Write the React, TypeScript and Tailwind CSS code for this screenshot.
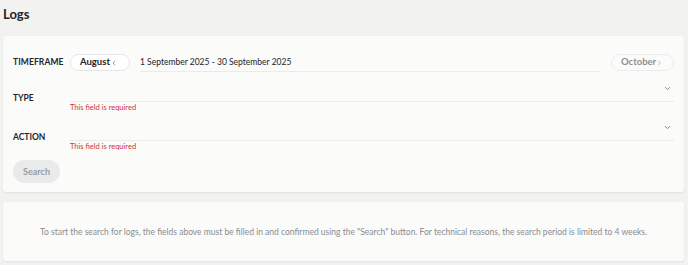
import React from "react";
import { ChevronLeft, ChevronRight, ChevronDown } from "lucide-react";

export default function App() {
  return (
    <div className="min-h-screen bg-[#f2f2f1] pl-[3px] pr-[4px] font-['Lato',sans-serif] text-[#222428]">
      <h1 className="h-[36px] pt-[5px] text-[13px] font-bold leading-[18px]">Logs</h1>

      {/* Search form */}
      <div className="rounded-[3px] bg-[#fbfbfa] pl-[10px] pr-[10px] pt-[18px] pb-[9px] shadow-[0_1px_2px_rgba(0,0,0,0.08)]">
        <div className="flex items-start">
          <span className="w-[57px] pt-[3px] text-[8.5px] font-bold uppercase leading-[11px] tracking-[0.1px]">Timeframe</span>
          <button className="flex h-[17px] w-[60px] items-center justify-between rounded-full border border-[#e6e6e6] bg-white pl-[9px] pr-[11px] text-[9.5px] font-bold">
            August <ChevronLeft size={8} strokeWidth={1.75} className="text-[#555]" />
          </button>
          <div className="ml-[10px] flex h-[18px] flex-1 items-center border-b border-[#ebebeb] text-[8.5px]">
            1 September 2025 - 30 September 2025
          </div>
          <button className="ml-[11px] flex h-[17px] w-[63px] items-center justify-between rounded-full border border-[#ececec] pl-[9px] pr-[10px] text-[9.5px] font-bold text-[#8d8f93]">
            October <ChevronRight size={8} strokeWidth={1.75} />
          </button>
        </div>

        <SelectRow label="Type" height="h-[30px]" />
        <SelectRow label="Action" height="h-[28px]" />

        <button className="mt-[8px] h-[23px] w-[47px] rounded-full bg-[#e9eaea] text-[9px] font-bold text-[#9a9c9f]">
          Search
        </button>
      </div>

      {/* Hint */}
      <div className="mt-[10px] flex h-[59px] items-center justify-center rounded-[3px] bg-[#fbfbfa] pt-[1px] text-[8.5px] text-[#8a8c90] shadow-[0_1px_2px_rgba(0,0,0,0.08)]">
        To start the search for logs, the fields above must be filled in and confirmed using the "Search" button. For technical reasons, the search period is limited to 4 weeks.
      </div>
    </div>
  );
}

function SelectRow({ label, height }: { label: string; height: string }) {
  return (
    <div>
      <div className="flex items-end">
        <span className="mb-[-2px] w-[57px] text-[8.5px] font-bold uppercase leading-[11px]">{label}</span>
        <div className={`flex flex-1 items-end justify-end border-b border-[#ebebeb] pb-[8px] pr-[2px] ${height}`}>
          <ChevronDown size={9} strokeWidth={2} className="text-[#666]" />
        </div>
      </div>
      <p className="ml-[57px] mt-[1px] text-[7.5px] leading-[10px] text-[#c9343f]">This field is required</p>
    </div>
  );
}
